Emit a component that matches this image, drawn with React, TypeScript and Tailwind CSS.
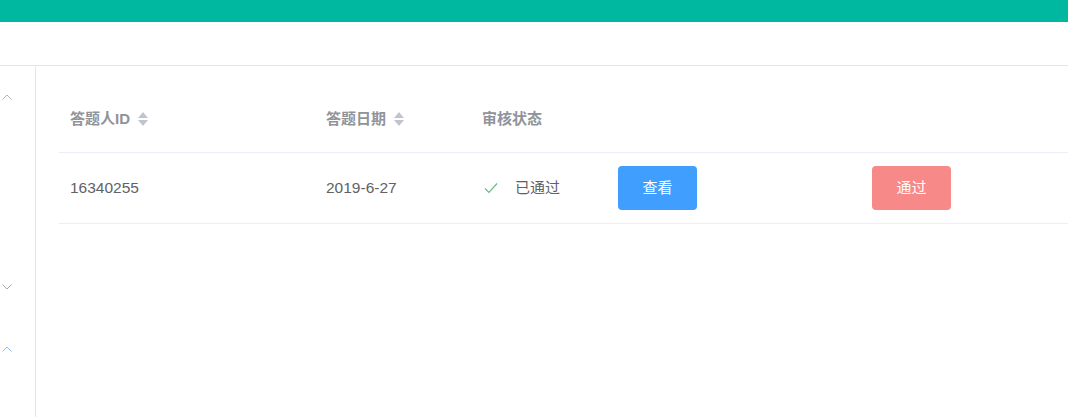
import React from "react";

function Chevron({ up, className }: { up?: boolean; className: string }) {
  return (
    <svg viewBox="0 0 10 6" className={`h-[6px] w-[10px] ${className}`} fill="none" aria-hidden="true">
      <path
        d={up ? "M0.5 5.5L5 1l4.5 4.5" : "M0.5 0.5L5 5l4.5-4.5"}
        stroke="currentColor"
        strokeWidth="1"
      />
    </svg>
  );
}

function SortCaret() {
  return (
    <span className="ml-[8px] inline-flex flex-col gap-[2px]">
      <svg viewBox="0 0 10 6" className="h-[6px] w-[10px] text-[#c0c4cc]" aria-hidden="true">
        <path d="M0 6L5 0l5 6z" fill="currentColor" />
      </svg>
      <svg viewBox="0 0 10 6" className="h-[6px] w-[10px] text-[#c0c4cc]" aria-hidden="true">
        <path d="M0 0h10L5 6z" fill="currentColor" />
      </svg>
    </span>
  );
}

const rows = [{ id: "16340255", date: "2019-6-27", status: "已通过" }];

export default function App() {
  return (
    <div
      className="flex h-[417px] w-[1068px] flex-col overflow-hidden bg-white"
      style={{ fontFamily: '"Liberation Sans", Arial, "Noto Sans CJK SC", sans-serif' }}
    >
      <div className="h-[22px] shrink-0 bg-[#00b8a0]" />
      <div className="h-[44px] shrink-0 border-b border-[#e6e6e6] bg-white" />
      <div className="flex min-h-0 flex-1">
        <aside className="w-[36px] shrink-0 border-r border-[#e6e6e6] pl-[2px]">
          <div className="pt-[28px]">
            <Chevron up className="text-[#b4b4b4]" />
          </div>
          <div className="pt-[184px]">
            <Chevron className="text-[#b0a898]" />
          </div>
          <div className="pt-[56px]">
            <Chevron up className="text-[#8cc0f0]" />
          </div>
        </aside>
        <main className="min-w-0 flex-1 pl-[23px] pt-[20px]">
          <div className="w-[1100px] text-[15px]">
            <div className="flex h-[67px] items-center border-b border-[#ebeef5] font-bold text-[#909399]">
              <div className="flex w-[256px] items-center px-[11px]">
                答题人ID
                <SortCaret />
              </div>
              <div className="flex w-[156px] items-center px-[11px]">
                答题日期
                <SortCaret />
              </div>
              <div className="w-[136px] px-[11px]">审核状态</div>
              <div className="w-[254px]" />
              <div className="flex-1" />
            </div>
            {rows.map((row) => (
              <div
                key={row.id}
                className="flex h-[71px] items-center border-b border-[#ebeef5] text-[#606266]"
              >
                <div className="w-[256px] px-[11px] text-[15.5px]">{row.id}</div>
                <div className="w-[156px] px-[11px] text-[15.5px]">{row.date}</div>
                <div className="flex w-[136px] items-center px-[11px]">
                  <svg viewBox="0 0 14 12" className="ml-[2px] h-[12px] w-[14px]" fill="none" aria-hidden="true">
                    <path d="M1 6.5l4 4L13 1.5" stroke="#6cb98a" strokeWidth="1.2" />
                  </svg>
                  <span className="ml-[17px]">{row.status}</span>
                </div>
                <div className="w-[254px] px-[11px]">
                  <button
                    type="button"
                    className="h-[44px] w-[79px] rounded-[4px] bg-[#409eff] text-[15px] text-white"
                  >
                    查看
                  </button>
                </div>
                <div className="flex-1 px-[11px]">
                  <button
                    type="button"
                    className="h-[44px] w-[79px] rounded-[4px] bg-[#f78989] text-[15px] text-white"
                  >
                    通过
                  </button>
                </div>
              </div>
            ))}
          </div>
        </main>
      </div>
    </div>
  );
}
